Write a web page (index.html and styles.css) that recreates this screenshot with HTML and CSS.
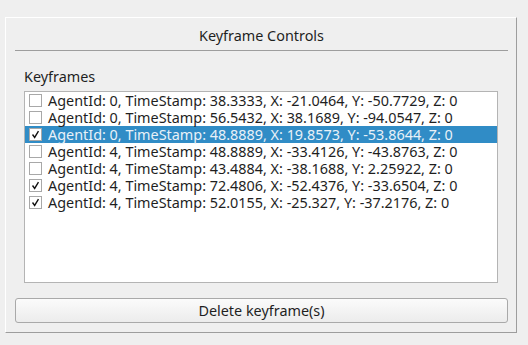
FILE: index.html
```html
<!DOCTYPE html>
<html lang="en">
<head>
    <meta charset="UTF-8">
    <title>Keyframe Controls</title>
    <link rel="stylesheet" href="styles.css">
</head>
<body>
    <div class="panel">
        <div class="panel-title">Keyframe Controls</div>

        <div class="group-label">Keyframes</div>
        <ul class="keyframe-list">
            <li class="row"><span class="check"></span>AgentId: 0, TimeStamp: 38.3333, X: -21.0464, Y: -50.7729, Z: 0</li>
            <li class="row"><span class="check"></span>AgentId: 0, TimeStamp: 56.5432, X: 38.1689, Y: -94.0547, Z: 0</li>
            <li class="row selected"><span class="check"><svg viewBox="0 0 13 13"><path d="M3 6.5 L5.5 10 L10 2.5"/></svg></span>AgentId: 0, TimeStamp: 48.8889, X: 19.8573, Y: -53.8644, Z: 0</li>
            <li class="row"><span class="check"></span>AgentId: 4, TimeStamp: 48.8889, X: -33.4126, Y: -43.8763, Z: 0</li>
            <li class="row"><span class="check"></span>AgentId: 4, TimeStamp: 43.4884, X: -38.1688, Y: 2.25922, Z: 0</li>
            <li class="row"><span class="check"><svg viewBox="0 0 13 13"><path d="M3 6.5 L5.5 10 L10 2.5"/></svg></span>AgentId: 4, TimeStamp: 72.4806, X: -52.4376, Y: -33.6504, Z: 0</li>
            <li class="row"><span class="check"><svg viewBox="0 0 13 13"><path d="M3 6.5 L5.5 10 L10 2.5"/></svg></span>AgentId: 4, TimeStamp: 52.0155, X: -25.327, Y: -37.2176, Z: 0</li>
        </ul>

        <button class="delete-btn">Delete keyframe(s)</button>
    </div>
</body>
</html>
```

FILE: styles.css
```css
* {
    margin: 0;
    padding: 0;
    box-sizing: border-box;
}

body {
    font-family: "Noto Sans", sans-serif;
    font-size: 14.4px;
    color: #1f1f1f;
    background: #efefef;
    width: 528px;
    height: 345px;
    overflow: hidden;
}

.panel {
    margin: 17px 0 0 5px;
    width: 512px;
    height: 316px;
    border-top: 1px solid #ffffff;
    border-left: 1px solid #ffffff;
    border-right: 1px solid #9d9d9d;
    border-bottom: 1px solid #9d9d9d;
    display: flex;
    flex-direction: column;
}

.panel-title {
    height: 33px;
    margin: 0 8px 0 9px;
    border-bottom: 1px solid #9d9d9d;
    text-align: center;
    line-height: 36px;
}

.group-label {
    margin: 17px 0 0 18px;
    line-height: 17px;
}

.keyframe-list {
    list-style: none;
    margin: 6px 18px 0 18px;
    height: 192px;
    background: #ffffff;
    border: 1px solid #b4b4b4;
}

.row {
    height: 17px;
    line-height: 17px;
    display: flex;
    align-items: center;
    white-space: nowrap;
}

.row.selected {
    background: #308cc6;
    color: #e8f1f8;
}

.check {
    width: 13px;
    height: 13px;
    margin: 0 6px 0 4px;
    background: #ffffff;
    border: 1px solid #a8a8a8;
    flex-shrink: 0;
}

.check svg {
    display: block;
    width: 11px;
    height: 11px;
}

.check path {
    fill: none;
    stroke: #111111;
    stroke-width: 1.6;
}

.delete-btn {
    margin: 15px 8px 0 9px;
    height: 25px;
    font-family: inherit;
    font-size: 14.4px;
    color: #1f1f1f;
    border: 1px solid #a9a9a9;
    border-radius: 3px;
    background: linear-gradient(#fbfbfb, #ececec);
}
```
